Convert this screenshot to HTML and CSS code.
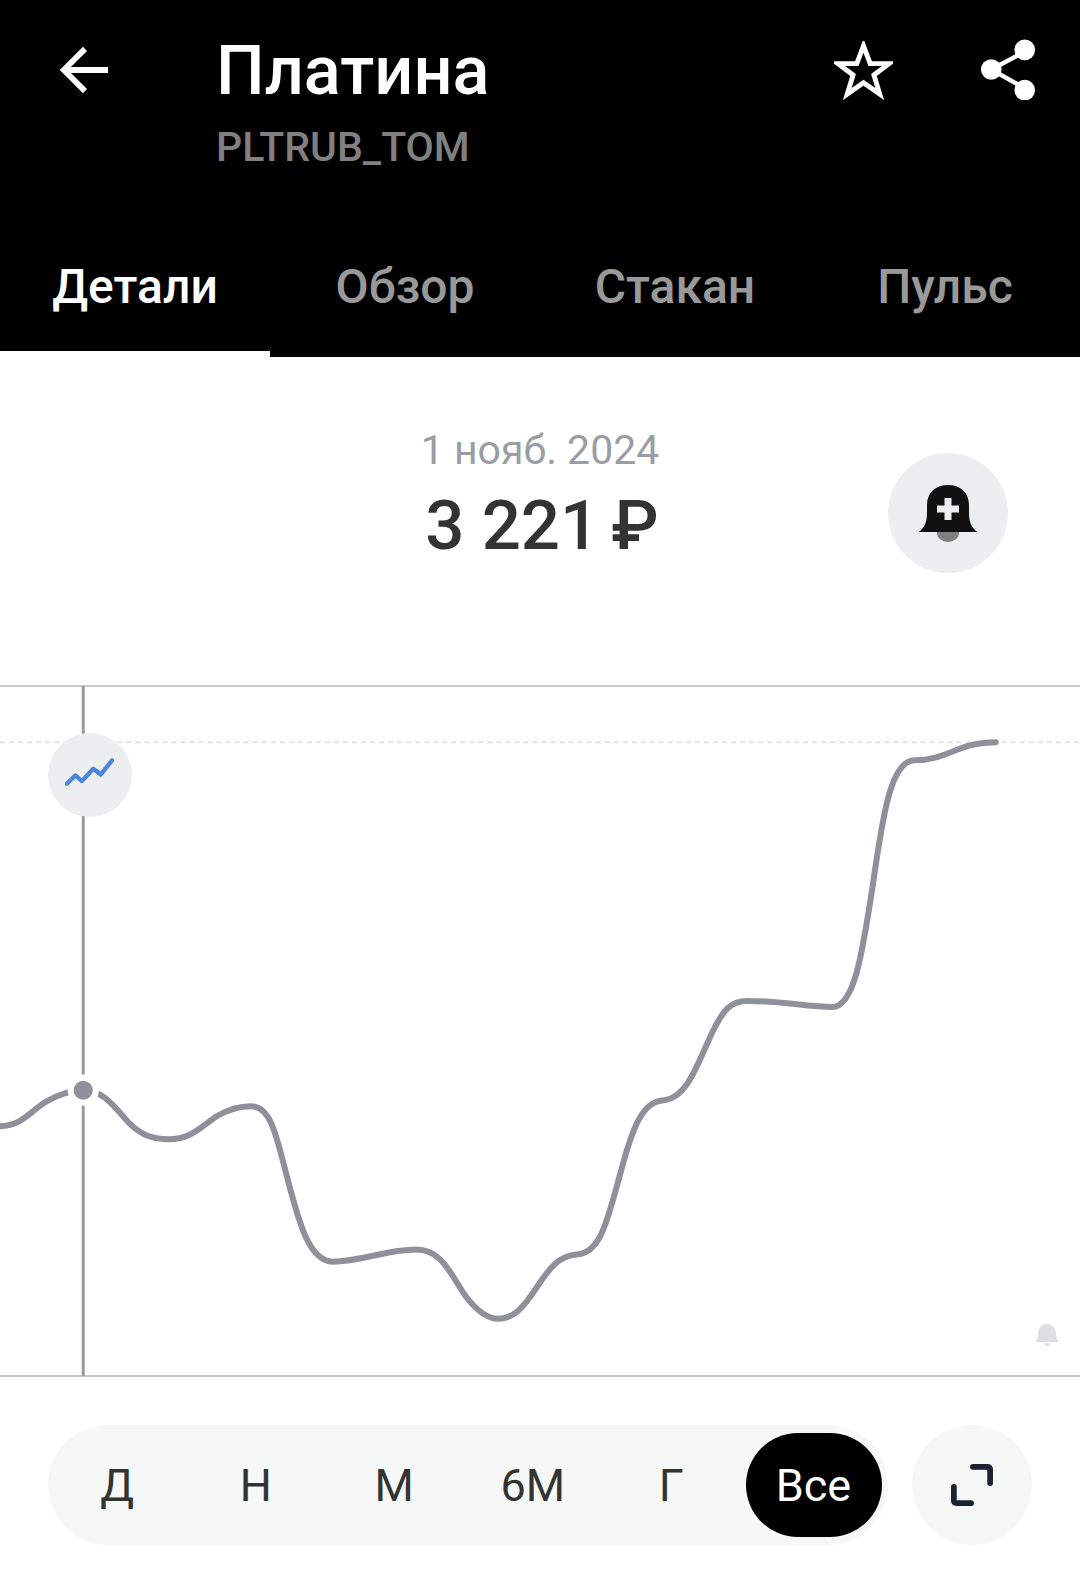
FILE: index.html
```html
<!DOCTYPE html>
<html lang="ru">
<head>
    <meta charset="UTF-8">
    <meta name="viewport" content="width=device-width, initial-scale=1.0">
    <title>Платина</title>
    <link rel="stylesheet" href="styles.css">
</head>
<body>
<div class="header">
    <div class="top-bar">
        <svg class="back-icon" viewBox="0 0 52 52" fill="none">
            <path d="M50 26H5M26 4L4 26L26 48" stroke="#FFFFFF" stroke-width="6"/>
        </svg>
        <div class="title-block">
            <h1 class="page-title">Платина</h1>
            <p class="page-ticker">PLTRUB_TOM</p>
        </div>
        <svg class="star-icon" viewBox="0 0 60 60" fill="none">
            <path d="M30 5L36.8 23H56L40.6 34.600L46.500 54L30 42.500L13.500 54L19.400 34.600L4 23H23.200Z" stroke="#FFFFFF" stroke-width="5"/>
        </svg>
        <svg class="share-icon" viewBox="0 0 56 62" fill="none">
            <path d="M45 13L11 31L45 50" stroke="#FFFFFF" stroke-width="4.500"/>
            <circle cx="45" cy="11" r="10.500" fill="#FFFFFF"/>
            <circle cx="11" cy="31" r="10.500" fill="#FFFFFF"/>
            <circle cx="45" cy="52" r="10.500" fill="#FFFFFF"/>
        </svg>
    </div>
    <div class="tabs">
        <div class="tab active">Детали</div>
        <div class="tab">Обзор</div>
        <div class="tab">Стакан</div>
        <div class="tab">Пульс</div>
    </div>
</div>

<div class="price-row">
    <div class="price-info">
        <div class="price-date">1 нояб. 2024</div>
        <div class="price-value"><span>3 221</span><span>₽</span></div>
    </div>
    <div class="alert-button">
        <svg class="alert-icon" viewBox="0 0 60 60" fill="none">
            <path d="M19 47V50a11 9 0 0 0 22 0V47Z" fill="#808080"/>
            <path d="M1 49C7 44 9 38 9 30V22C9 9 18 2 30 2S51 9 51 22V30C51 38 53 44 59 49Z" fill="#111111"/>
            <path d="M26.500 15H33.500V22.500H41V29.500H33.500V37H26.500V29.500H19V22.500H26.500Z" fill="#ECEEF0"/>
        </svg>
    </div>
</div>

<div class="chart">
    <svg class="chart-svg" viewBox="0 684 1077 690" fill="none">
        <path class="chart-border" d="M0 685H1077M0 1373H1077"/>
        <path class="chart-top" d="M0 741H1077"/>
        <path class="chart-cursor" d="M83 685V1373"/>
        <path class="chart-line" d="M0 1124C22 1123 28 1111 45 1100C60 1091 72 1088 83 1088C102 1088 112 1102 128 1120C142 1134 154 1137 168 1137C190 1137 200 1125 216 1114C228 1107 238 1104 250 1104C268 1104 274 1126 284 1166C296 1211 306 1259 332 1259C360 1259 385 1247 415 1247C440 1247 448 1269 464 1293C476 1309 486 1316 497 1316C512 1316 522 1305 535 1285C548 1265 558 1253 575 1252C600 1250 606 1216 620 1166C632 1121 642 1099 662 1098C685 1096 695 1063 710 1031C722 1006 730 999 745 999C780 999 805 1005 830 1005C852 1005 860 951 870 886C880 816 888 759 912 759C945 759 955 741 993 741"/>
        <circle cx="83" cy="1088" r="15.500" fill="#FFFFFF"/>
        <circle cx="83" cy="1088" r="9.500" fill="#8E9199"/>
    </svg>
    <div class="trend-badge">
        <svg class="trend-icon" viewBox="0 0 52 36" fill="none">
            <path d="M2 29L11 20L18 26L30 13L38 19L50 4" stroke="#4A86E0" stroke-width="4.500" stroke-linecap="round" stroke-linejoin="round"/>
        </svg>
    </div>
    <svg class="mini-bell" viewBox="0 0 26 24" fill="none">
        <path d="M1 19C3 17 4 15 4 11C4 5 8 1 13 1S22 5 22 11C22 15 23 17 25 19Z M10 20.500H16C16 24 10 24 10 20.500Z" fill="#DCDEDF"/>
    </svg>
</div>

<div class="controls">
    <div class="period-pill">
        <div class="period">Д</div>
        <div class="period">Н</div>
        <div class="period">М</div>
        <div class="period">6М</div>
        <div class="period">Г</div>
        <div class="period selected">Все</div>
    </div>
    <div class="expand-button">
        <svg class="expand-icon" viewBox="0 0 44 44" fill="none">
            <path d="M23 3H38C40 3 41 4 41 6V20M3 24V38C3 40 4 41 6 41H21" stroke="#1A2130" stroke-width="6" stroke-linecap="round" stroke-linejoin="round"/>
        </svg>
    </div>
</div>
</body>
</html>
```

FILE: styles.css
```css
* {
    box-sizing: border-box;
    margin: 0;
    padding: 0;
}

body {
    font-family: Roboto, "Noto Sans", sans-serif;
    background-color: #FFFFFF;
    color: #333333;
    width: 1080px;
    height: 1572px;
    overflow: hidden;
}

.header {
    background-color: #000000;
    height: 357px;
    display: flex;
    flex-direction: column;
}

.top-bar {
    display: flex;
    align-items: flex-start;
    height: 235px;
    padding: 32px 44px 0 60px;
}

.back-icon {
    width: 50px;
    height: 50px;
    margin-top: 13px;
    margin-right: 106px;
}

.title-block {
    flex: 1;
}

.page-title {
    font-size: 68.500px;
    font-weight: 500;
    line-height: 78px;
    color: #FFFFFF;
}

.page-ticker {
    font-size: 41px;
    font-weight: 500;
    line-height: 48px;
    margin-top: 13px;
    color: #808080;
}

.star-icon {
    width: 59px;
    height: 59px;
    margin-top: 9px;
    margin-right: 87px;
}

.share-icon {
    width: 56px;
    height: 61px;
    margin-top: 7px;
}

.tabs {
    flex: 1;
    display: flex;
}

.tab {
    width: 270px;
    height: 122px;
    text-align: center;
    font-size: 48px;
    font-weight: 500;
    line-height: 104px;
    color: #999999;
}

.tab.active {
    color: #FFFFFF;
    border-bottom: 6px solid #FFFFFF;
}

.price-row {
    display: grid;
    grid-template-columns: 1fr auto 1fr;
    align-items: center;
    height: 328px;
    padding: 0 72px 16px 0;
}

.price-info {
    grid-column: 2;
    align-self: start;
    text-align: center;
    margin: 70px 0 0 72px;
}

.price-date {
    font-size: 41px;
    line-height: 46px;
    margin-bottom: 13px;
    color: #9A9DA3;
}

.price-value {
    display: flex;
    justify-content: center;
    gap: 12px;
    padding-left: 4px;
    font-size: 69px;
    font-weight: 500;
    line-height: 80px;
    color: #333333;
}

.alert-button {
    grid-column: 3;
    justify-self: end;
    width: 120px;
    height: 120px;
    border-radius: 50%;
    background-color: #ECEEF0;
    display: flex;
    align-items: center;
    justify-content: center;
}

.alert-icon {
    width: 60px;
    height: 60px;
}

.chart {
    position: relative;
    height: 692px;
}

.chart-svg {
    display: block;
    width: 1080px;
    height: 692px;
}

.chart-border {
    stroke: #C8C8C8;
    stroke-width: 2;
}

.chart-top {
    stroke: #E4E4E4;
    stroke-width: 2;
    stroke-dasharray: 5 4;
}

.chart-cursor {
    stroke: #9A9A9A;
    stroke-width: 3;
}

.chart-line {
    stroke: #8E9199;
    stroke-width: 6;
    stroke-linecap: round;
}

.trend-badge {
    position: absolute;
    left: 48px;
    top: 48px;
    width: 84px;
    height: 84px;
    border-radius: 50%;
    background-color: #ECEEF0;
    display: flex;
    align-items: center;
    justify-content: center;
}

.trend-icon {
    width: 49px;
    height: 35px;
    margin: 0 2px 3px 0;
}

.mini-bell {
    position: absolute;
    left: 1034px;
    top: 638px;
    width: 26px;
    height: 24px;
}

.controls {
    display: flex;
    align-items: center;
    gap: 24px;
    padding: 48px 0 0 48px;
}

.period-pill {
    display: flex;
    align-items: center;
    width: 840px;
    height: 120px;
    border-radius: 60px;
    background-color: #F6F8F8;
}

.period {
    width: 138.500px;
    height: 104px;
    text-align: center;
    font-size: 45px;
    line-height: 106px;
    color: #333333;
}

.period.selected {
    width: 136px;
    margin-left: 5px;
    border-radius: 52px;
    background-color: #000000;
    color: #FFFFFF;
}

.expand-button {
    width: 120px;
    height: 120px;
    border-radius: 50%;
    background-color: #F6F8F8;
    display: flex;
    align-items: center;
    justify-content: center;
}

.expand-icon {
    width: 42px;
    height: 42px;
}
```
